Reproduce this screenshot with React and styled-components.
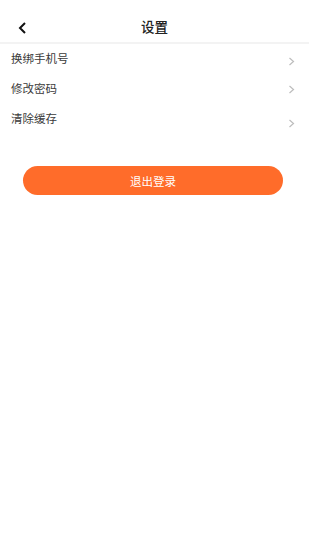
import React from 'react';
import styled, { createGlobalStyle } from 'styled-components';

const GlobalStyle = createGlobalStyle`
  html, body {
    margin: 0;
    padding: 0;
    background: #ffffff;
  }
  body {
    font-family: 'Noto Sans CJK SC', 'Noto Sans', sans-serif;
  }
`

const Page = styled.div`
  width: 309px;
  min-height: 543px;
  background: #ffffff;
  display: flex;
  flex-direction: column;
`

const Header = styled.div`
  position: relative;
  height: 28px;
  margin-top: 13px;
  padding-bottom: 1px;
  display: flex;
  align-items: center;
  justify-content: center;
  border-bottom: 2px solid #f3f3f3;
`

const BackButton = styled.div`
  position: absolute;
  left: 14px;
  top: 1px;
  height: 28px;
  width: 16px;
  display: flex;
  align-items: center;
  justify-content: center;
  cursor: pointer;
`

const Title = styled.h1`
  margin: 0 0 2px;
  font-size: 13.5px;
  font-weight: 500;
  color: #222222;
`

const List = styled.ul`
  list-style: none;
  margin: 0;
  padding: 0;
`

const Row = styled.li`
  height: 30px;
  padding: 0 14px 0 11px;
  display: flex;
  align-items: center;
  justify-content: space-between;
  cursor: pointer;

  p {
    margin: 0 0 2px;
    font-size: 11.5px;
    color: #3a3a3a;
  }
`

const Chevron = styled.span`
  display: flex;
  transform: translateY(${props => props.offset || 0}px);
`

const LogoutButton = styled.button`
  margin: 32px 26px 0 23px;
  height: 29px;
  border: none;
  border-radius: 15px;
  background: #ff6c2a;
  color: #ffffff;
  font-family: inherit;
  font-size: 11.5px;
  cursor: pointer;
`

const items = [
    { label: '换绑手机号', offset: 2 },
    { label: '修改密码', offset: 0 },
    { label: '清除缓存', offset: 4 },
]

const App = () => {
    return (
        <Page>
            <GlobalStyle />
            <Header>
                <BackButton>
                    <svg width="9" height="12" viewBox="0 0 9 12">
                        <path d="M7 1 L2 6 L7 11" fill="none" stroke="#111" strokeWidth="2" />
                    </svg>
                </BackButton>
                <Title>设置</Title>
            </Header>
            <List>
                {
                    items.map(item => (
                        <Row key={item.label}>
                            <p>{item.label}</p>
                            <Chevron offset={item.offset}>
                                <svg width="7" height="9" viewBox="0 0 7 9">
                                    <path d="M1.5 1 L5.5 4.5 L1.5 8" fill="none" stroke="#bdbdbd" strokeWidth="1.2" />
                                </svg>
                            </Chevron>
                        </Row>
                    ))
                }
            </List>
            <LogoutButton>退出登录</LogoutButton>
        </Page>
    );
};

export default App;
